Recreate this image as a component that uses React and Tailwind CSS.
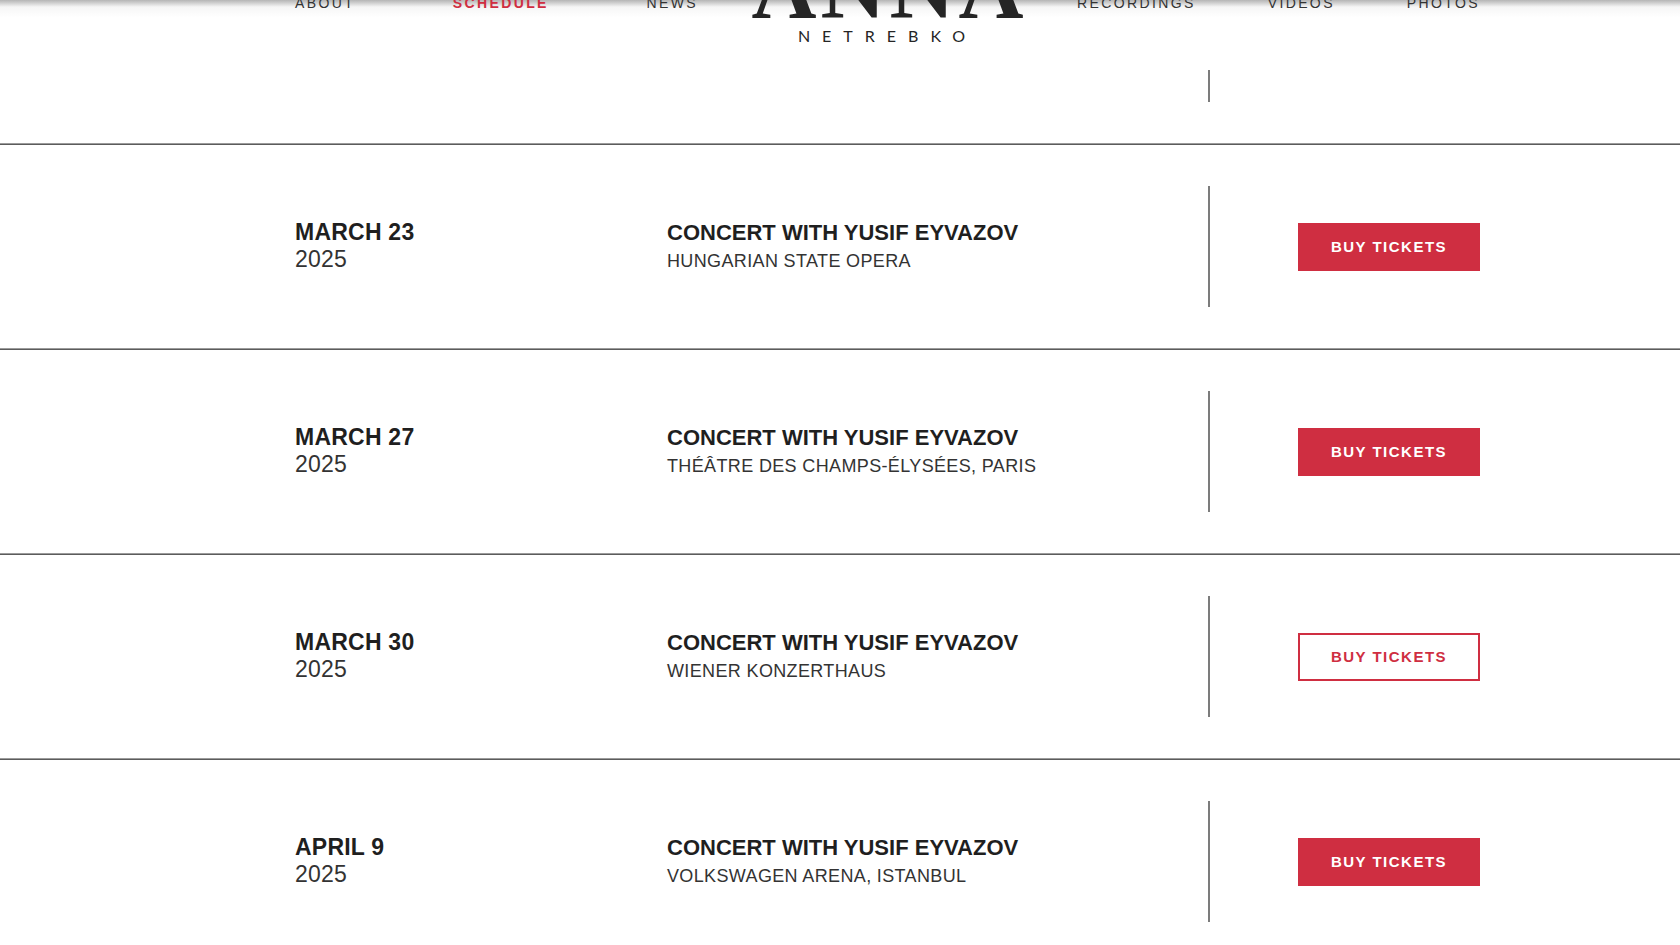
import React from 'react'
import clsx from 'clsx'

const leftLinks = [
     { label: "ABOUT", href: "#about" },
     { label: "SCHEDULE", href: "#schedule", active: true },
     { label: "NEWS", href: "#news" },
]

const rightLinks = [
     { label: "RECORDINGS", href: "#recordings" },
     { label: "VIDEOS", href: "#videos" },
     { label: "PHOTOS", href: "#photos" },
]

const concerts = [
     { day: "MARCH 23", year: "2025", title: "CONCERT WITH YUSIF EYVAZOV", venue: "HUNGARIAN STATE OPERA" },
     { day: "MARCH 27", year: "2025", title: "CONCERT WITH YUSIF EYVAZOV", venue: "THÉÂTRE DES CHAMPS-ÉLYSÉES, PARIS" },
     { day: "MARCH 30", year: "2025", title: "CONCERT WITH YUSIF EYVAZOV", venue: "WIENER KONZERTHAUS", outlined: true },
     { day: "APRIL 9", year: "2025", title: "CONCERT WITH YUSIF EYVAZOV", venue: "VOLKSWAGEN ARENA, ISTANBUL" },
]

const NavLinks = ({ links, className }) => (
     <ul className={clsx("mt-[45px] flex justify-between text-sm leading-4 tracking-[0.17em]", className)}>
          {links.map((link) => (
               <li key={link.label}>
                    <a href={link.href} className={link.active ? "font-bold text-[#cf2e41]" : "text-[#333333]"}>
                         {link.label}
                    </a>
               </li>
          ))}
     </ul>
)

const Logo = () => (
     <a href="#home" className="flex flex-col items-center text-[#252525]">
          <span className="font-['Liberation_Serif',serif] font-bold text-[90px] leading-[76px] tracking-[4px] -mr-1">ANNA</span>
          <span className="font-[Lato,sans-serif] text-base leading-5 tracking-[12px]">NETREBKO</span>
     </a>
)

// The bar is scrolled partly out of view, so its content is pulled up
const Header = () => (
     <header className="sticky top-0 z-10 h-[70px] overflow-hidden bg-white bg-linear-to-b from-[#b5b5b5] via-[#f6f6f6] via-10% to-white to-25% pl-24">
          <nav className="mx-auto -mt-[50px] grid w-3/4 grid-cols-[404fr_379fr_405fr]">
               <NavLinks links={leftLinks} className="pl-px" />
               <Logo />
               <NavLinks links={rightLinks} className="pr-0.5" />
          </nav>
     </header>
)

const ConcertRow = ({ day, year, title, venue, outlined }) => (
     <li className="mt-px border-t border-[#5c5c5c] py-[41px] pl-24 shadow-[0_-1px_0_#9b9b9b]">
          <div className="mx-auto grid h-[121px] w-3/4 grid-cols-[372fr_542fr_274fr] items-center">
               {/* Date */}
               <div className="pb-0.5 pl-px text-[23px] leading-[27px] tracking-[0.01em]">
                    <p className="font-bold text-[#1f1f1f]">{day}</p>
                    <p>{year}</p>
               </div>

               {/* Programme and venue */}
               <div className="flex flex-col gap-0.5 pl-px pr-6">
                    <h2 className="text-[22px] font-bold leading-[27px] text-[#1f1f1f]">{title}</h2>
                    <p className="text-lg leading-[27px] tracking-[0.02em]">{venue}</p>
               </div>

               {/* Tickets */}
               <div className="flex h-full items-center border-l-2 border-[#7c7c7c] pl-[88px]">
                    <a
                         href="#tickets"
                         className={clsx(
                              "flex h-12 w-[182px] items-center justify-center border-2 border-[#cf2e41] pt-0.5 text-[15px] font-bold tracking-[0.1em]",
                              outlined ? "bg-white text-[#cf2e41]" : "bg-[#cf2e41] text-white"
                         )}
                    >
                         BUY TICKETS
                    </a>
               </div>
          </div>
     </li>
)

const App = () => {
     return (
          <div className="h-screen overflow-hidden bg-white font-['Liberation_Sans',Arial,sans-serif] text-[#333333]">
               <Header />
               <main>
                    {/* End of the previous row, still showing under the header */}
                    <div className="pb-[41px] pl-24">
                         <div className="mx-auto grid h-8 w-3/4 grid-cols-[914fr_274fr]">
                              <div className="col-start-2 border-l-2 border-[#7c7c7c]" />
                         </div>
                    </div>
                    <ul>
                         {concerts.map((concert) => (
                              <ConcertRow key={concert.day} {...concert} />
                         ))}
                    </ul>
               </main>
          </div>
     )
}

export default App
